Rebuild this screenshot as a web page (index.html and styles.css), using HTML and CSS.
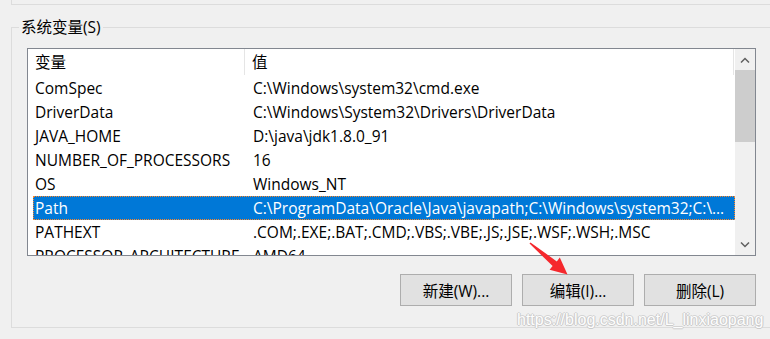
FILE: index.html
```html
<!DOCTYPE html>
<html lang="zh-CN">
<head>
    <meta charset="UTF-8">
    <title>系统变量</title>
    <link rel="stylesheet" href="styles.css">
</head>
<body>
    <div class="prev-group"></div>

    <div class="group">
        <div class="group-title">系统变量(S)</div>

        <div class="listbox">
            <div class="list">
                <div class="list-header">
                    <div class="col-name">变量</div>
                    <div class="col-value">值</div>
                </div>
                <div class="row"><div class="cell-name">ComSpec</div><div class="cell-value">C:\Windows\system32\cmd.exe</div></div>
                <div class="row"><div class="cell-name">DriverData</div><div class="cell-value">C:\Windows\System32\Drivers\DriverData</div></div>
                <div class="row"><div class="cell-name">JAVA_HOME</div><div class="cell-value">D:\java\jdk1.8.0_91</div></div>
                <div class="row"><div class="cell-name">NUMBER_OF_PROCESSORS</div><div class="cell-value">16</div></div>
                <div class="row"><div class="cell-name">OS</div><div class="cell-value">Windows_NT</div></div>
                <div class="row selected"><div class="cell-name">Path</div><div class="cell-value">C:\ProgramData\Oracle\Java\javapath;C:\Windows\system32;C:\Windows;C:\Windows\System32\Wbem</div></div>
                <div class="row"><div class="cell-name">PATHEXT</div><div class="cell-value">.COM;.EXE;.BAT;.CMD;.VBS;.VBE;.JS;.JSE;.WSF;.WSH;.MSC</div></div>
                <div class="row"><div class="cell-name">PROCESSOR_ARCHITECTURE</div><div class="cell-value">AMD64</div></div>
            </div>
            <div class="scrollbar">
                <div class="sb-btn">
                    <svg width="10" height="6" viewBox="0 0 10 6"><path d="M1 5.5 L5 1.5 L9 5.5" fill="none" stroke="#606060" stroke-width="1.5"/></svg>
                </div>
                <div class="sb-thumb"></div>
                <div class="sb-track"></div>
                <div class="sb-btn">
                    <svg width="10" height="6" viewBox="0 0 10 6"><path d="M1 0.5 L5 4.5 L9 0.5" fill="none" stroke="#606060" stroke-width="1.5"/></svg>
                </div>
            </div>
        </div>

        <div class="buttons">
            <button class="btn">新建(W)...</button>
            <button class="btn">编辑(I)...</button>
            <button class="btn">删除(L)</button>
        </div>
    </div>

    <!-- 标注箭头 -->
    <svg class="arrow" width="770" height="339" viewBox="0 0 770 339">
        <polygon points="529.5,243.6 552.6,266 549.6,269.8 567.5,274.5 559.8,257.6 556.8,261.4 530.5,242.4" fill="#f5282d"/>
    </svg>

    <div class="watermark">https://blog.csdn.net/L_linxiaopang</div>
</body>
</html>
```

FILE: styles.css
```css
body {
    margin: 0;
    padding: 0;
    background-color: #f0f0f0;
    color: #000;
    font-family: "Open Sans", "Noto Sans CJK SC", sans-serif;
    font-size: 15.5px;
    width: 770px;
    height: 339px;
    overflow: hidden;
    position: relative;
}

.prev-group {
    height: 4px;
    margin-left: 11px;
    border-left: 1px solid #dcdcdc;
    border-bottom: 1px solid #dcdcdc;
}

.group {
    margin-top: 22px;
    margin-left: 11px;
    width: 759px;
    height: 301px;
    border: 1px solid #dcdcdc;
    border-right: none;
    padding-left: 15px;
    box-sizing: border-box;
}

.group-title {
    width: fit-content;
    margin-top: -11px;
    margin-left: -8px;
    padding: 0 2px;
    height: 20px;
    line-height: 20px;
    background-color: #f0f0f0;
}

.listbox {
    margin-top: 11px;
    width: 729px;
    height: 208px;
    box-sizing: border-box;
    border: 1px solid #828790;
    background-color: #fff;
    display: flex;
}

.list {
    flex: 1;
    overflow: hidden;
}

.list-header {
    display: flex;
    height: 27px;
    line-height: 27px;
}

.col-name {
    width: 217px;
    padding-left: 7px;
    border-right: 1px solid #e5e5e5;
    box-sizing: border-box;
    height: 26px;
}

.col-value {
    flex: 1;
    padding-left: 7px;
    margin-right: 1px;
    border-right: 1px solid #e5e5e5;
    height: 26px;
}

.row {
    display: flex;
    height: 24px;
    line-height: 24px;
    margin-left: 5px;
    box-sizing: border-box;
    white-space: nowrap;
}

.cell-name {
    width: 212px;
    padding-left: 2px;
    box-sizing: border-box;
    overflow: hidden;
}

.cell-value {
    flex: 1;
    padding-left: 8px;
    padding-right: 4px;
    overflow: hidden;
    text-overflow: ellipsis;
}

.row.selected {
    background-color: #0078d7;
    color: #fff;
    border: 1px dotted #ff8728;
    line-height: 22px;
}

.row.selected .cell-name {
    padding-left: 1px;
    width: 211px;
}

.scrollbar {
    width: 20px;
    background-color: #f0f0f0;
    display: flex;
    flex-direction: column;
}

.sb-btn {
    height: 21px;
    display: flex;
    align-items: center;
    justify-content: center;
}

.sb-thumb {
    height: 72px;
    background-color: #cdcdcd;
}

.sb-track {
    flex: 1;
}

.buttons {
    width: 729px;
    margin-top: 18px;
    display: flex;
    justify-content: flex-end;
    gap: 10px;
}

.btn {
    width: 112px;
    height: 32px;
    background-color: #e1e1e1;
    border: 1px solid #adadad;
    font-family: "Open Sans", "Noto Sans CJK SC", sans-serif;
    font-size: 15.5px;
    color: #000;
    padding: 0;
}

.arrow {
    position: absolute;
    left: 0;
    top: 0;
    pointer-events: none;
}

.watermark {
    position: absolute;
    left: 517px;
    top: 311px;
    font-family: "Liberation Sans", Arial, sans-serif;
    font-size: 16px;
    color: #fdfdfd;
    text-shadow: 1px 0 0 #cacaca, -1px 0 0 #cacaca, 0 1px 0 #cacaca, 0 -1px 0 #d4d4d4;
}
```
